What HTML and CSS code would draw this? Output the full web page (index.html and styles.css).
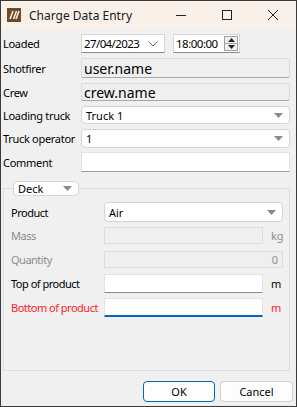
FILE: index.html
```html
<!DOCTYPE html>
<html>
  <head>
    <meta charset="UTF-8">
    <title>Charge Data Entry</title>
    <link rel="stylesheet" href="styles.css">
  </head>
  <body>
    <div class="window">
      <div class="titlebar">
        <div class="appicon">
          <svg width="14" height="14" viewBox="0 0 14 14">
            <rect width="14" height="14" fill="#6e4a26"/>
            <path d="M3 11 L6 3 M6.5 11 L9.5 3 M9 11 L12 3" stroke="#f2ece4" stroke-width="1.6"/>
          </svg>
        </div>
        <div class="title">Charge Data Entry</div>
        <div class="winbtn">
          <svg width="12" height="12" viewBox="0 0 12 12"><path d="M1 6.5 H11" stroke="#222" stroke-width="1"/></svg>
        </div>
        <div class="winbtn">
          <svg width="12" height="12" viewBox="0 0 12 12"><rect x="1.5" y="1.5" width="9" height="9" fill="none" stroke="#222" stroke-width="1"/></svg>
        </div>
        <div class="winbtn">
          <svg width="12" height="12" viewBox="0 0 12 12"><path d="M1 1 L11 11 M11 1 L1 11" stroke="#222" stroke-width="1"/></svg>
        </div>
      </div>

      <div class="content">
        <div class="row r-loaded">
          <div class="lbl">Loaded</div>
          <div class="date">
            <span>27/04/2023</span>
            <svg width="10" height="6" viewBox="0 0 10 6"><path d="M0.5 0.5 L5 5 L9.5 0.5" fill="none" stroke="#666" stroke-width="1"/></svg>
          </div>
          <div class="time">
            <span>18:00:00</span>
            <div class="spin">
              <div class="spinbtn"><svg width="7" height="4" viewBox="0 0 7 4"><path d="M0 4 L3.5 0 L7 4 Z" fill="#222"/></svg></div>
              <div class="spinbtn"><svg width="7" height="4" viewBox="0 0 7 4"><path d="M0 0 L3.5 4 L7 0 Z" fill="#222"/></svg></div>
            </div>
          </div>
        </div>

        <div class="row r-shot">
          <div class="lbl">Shotfirer</div>
          <div class="ro big">user.name</div>
        </div>

        <div class="row r-crew">
          <div class="lbl">Crew</div>
          <div class="ro big">crew.name</div>
        </div>

        <div class="row r-truck">
          <div class="lbl">Loading truck</div>
          <div class="combo wide">
            <span>Truck 1</span>
            <svg width="9" height="5" viewBox="0 0 9 5"><path d="M0 0 H9 L4.5 5 Z" fill="#8a8a8a"/></svg>
          </div>
        </div>

        <div class="row r-oper">
          <div class="lbl">Truck operator</div>
          <div class="combo wide">
            <span>1</span>
            <svg width="9" height="5" viewBox="0 0 9 5"><path d="M0 0 H9 L4.5 5 Z" fill="#8a8a8a"/></svg>
          </div>
        </div>

        <div class="row r-comment">
          <div class="lbl">Comment</div>
          <div class="edit wide"></div>
        </div>

        <fieldset class="group">
          <legend class="deck">
            <span>Deck</span>
            <svg width="9" height="5" viewBox="0 0 9 5"><path d="M0 0 H9 L4.5 5 Z" fill="#8a8a8a"/></svg>
          </legend>
          <div class="ginner">
            <div class="grow g-product">
              <div class="glbl">Product</div>
              <div class="combo gfull">
                <span>Air</span>
                <svg width="9" height="5" viewBox="0 0 9 5"><path d="M0 0 H9 L4.5 5 Z" fill="#8a8a8a"/></svg>
              </div>
            </div>
            <div class="grow g-mass">
              <div class="glbl off">Mass</div>
              <div class="dis gunit"></div>
              <div class="unit off">kg</div>
            </div>
            <div class="grow g-qty">
              <div class="glbl off">Quantity</div>
              <div class="dis gfull num">0</div>
            </div>
            <div class="grow g-top">
              <div class="glbl">Top of product</div>
              <div class="edit gunit line"></div>
              <div class="unit">m</div>
            </div>
            <div class="grow g-bottom">
              <div class="glbl bad">Bottom of product</div>
              <div class="edit gunit focus"></div>
              <div class="unit bad">m</div>
            </div>
          </div>
        </fieldset>

        <div class="buttons">
          <div class="btn default">OK</div>
          <div class="btn">Cancel</div>
        </div>
      </div>
    </div>
  </body>
</html>
```

FILE: styles.css
```css
*{
  box-sizing:border-box;
}
body{
  margin:0;
  font-family:"Noto Sans","Liberation Sans",sans-serif;
  font-size:11px;
  color:#000;
}
.window{
  width:297px;
  height:407px;
  border:1px solid #3a3a3a;
  background-color:#f0f0f0;
  display:flex;
  flex-direction:column;
}

/* title bar */
.titlebar{
  height:28px;
  background-color:#f8f0e9;
  display:flex;
  align-items:center;
}
.appicon{
  width:14px;
  height:14px;
  margin-left:6px;
  display:flex;
}
.title{
  margin-left:8px;
  flex:1;
  font-size:12px;
  color:#1a1a1a;
}
.winbtn{
  width:46px;
  height:28px;
  display:flex;
  align-items:center;
  justify-content:center;
}

/* top rows */
.content{
  flex:1;
  display:flex;
  flex-direction:column;
  padding-top:5px;
}
.row{
  display:flex;
  align-items:center;
}
.lbl{
  width:80px;
  flex-shrink:0;
  padding-left:2px;
  white-space:nowrap;
  letter-spacing:-0.3px;
}
.r-loaded{ height:19px; }
.r-shot{ height:20px; margin-top:5px; }
.r-crew{ height:18px; margin-top:5px; }
.r-truck{ height:18px; margin-top:5px; }
.r-oper{ height:19px; margin-top:5px; }
.r-comment{ height:20px; margin-top:4px; }

.date{
  width:84px;
  height:19px;
  background:#fff;
  border:1px solid #d6d6d6;
  border-bottom-color:#8a8a8a;
  display:flex;
  align-items:center;
  justify-content:space-between;
  padding:0 6px 0 2px;
  font-size:11.5px;
  letter-spacing:-0.6px;
}
.time{
  width:67px;
  height:19px;
  margin-left:8px;
  background:#fff;
  border:1px solid #d6d6d6;
  border-bottom-color:#8a8a8a;
  display:flex;
  align-items:center;
  justify-content:space-between;
  padding-left:2px;
  font-size:11.5px;
  letter-spacing:-0.5px;
}
.spin{
  width:14px;
  height:15px;
  margin-right:1px;
  border:1px solid #a0a0a0;
  display:flex;
  flex-direction:column;
  background:#f0f0f0;
}
.spinbtn{
  flex:1;
  display:flex;
  align-items:center;
  justify-content:center;
}
.spinbtn:first-child{
  border-bottom:1px solid #a0a0a0;
}

.ro{
  width:209px;
  height:100%;
  border:1px solid #dadada;
  border-bottom-color:#a8a8a8;
  border-radius:2px;
  background:#efefef;
  display:flex;
  align-items:center;
  padding-left:2px;
}
.big{
  font-size:14px;
}
.wide{
  width:209px;
  height:100%;
}
.combo{
  background:#fff;
  border:1px solid #d4d4d4;
  border-radius:4px;
  display:flex;
  align-items:center;
  justify-content:space-between;
  padding:0 6px 0 4px;
}
.edit{
  background:#fff;
  border:1px solid #e2e2e2;
  border-bottom-color:#a0a0a0;
}

/* group box */
.group{
  margin:9px 0 0 2px;
  padding:0;
  width:287px;
  height:190px;
  border:1px solid #dcdcdc;
  min-width:0;
}
.deck{
  margin-left:9px;
  width:66px;
  height:15px;
  background:#fff;
  border:1px solid #d4d4d4;
  border-radius:4px;
  display:flex;
  align-items:center;
  justify-content:space-between;
  padding:0 6px 0 4px;
}
.ginner{
  padding:6px 0 0 7px;
}
.grow{
  display:flex;
  align-items:center;
}
.glbl{
  width:93px;
  flex-shrink:0;
  white-space:nowrap;
  letter-spacing:-0.5px;
}
.g-product{ height:20px; }
.g-mass{ height:17px; margin-top:5px; }
.g-qty{ height:17px; margin-top:7px; }
.g-top{ height:19px; margin-top:6px; }
.g-bottom{ height:19px; margin-top:5px; }
.gfull{
  width:179px;
  height:100%;
}
.gunit{
  width:159px;
  height:100%;
}
.dis{
  border:1px solid #dddddd;
  background:#efefef;
}
.num{
  display:flex;
  align-items:center;
  justify-content:flex-end;
  padding-right:4px;
  color:#8c8c8c;
}
.unit{
  margin-left:8px;
}
.off{
  color:#8c8c8c;
}
.bad{
  color:#ff1a2a;
}
.line{
  border-bottom:1px solid #8a8a8a;
}
.focus{
  border-bottom:2px solid #0067c0;
}

/* buttons */
.buttons{
  display:flex;
  justify-content:flex-end;
  gap:5px;
  margin-top:10px;
  padding-right:3px;
}
.btn{
  width:73px;
  height:21px;
  border:1px solid #d0d0d0;
  border-radius:4px;
  background:#fdfdfd;
  display:flex;
  align-items:center;
  justify-content:center;
}
.default{
  width:72px;
  border-color:#0067c0;
}
```
